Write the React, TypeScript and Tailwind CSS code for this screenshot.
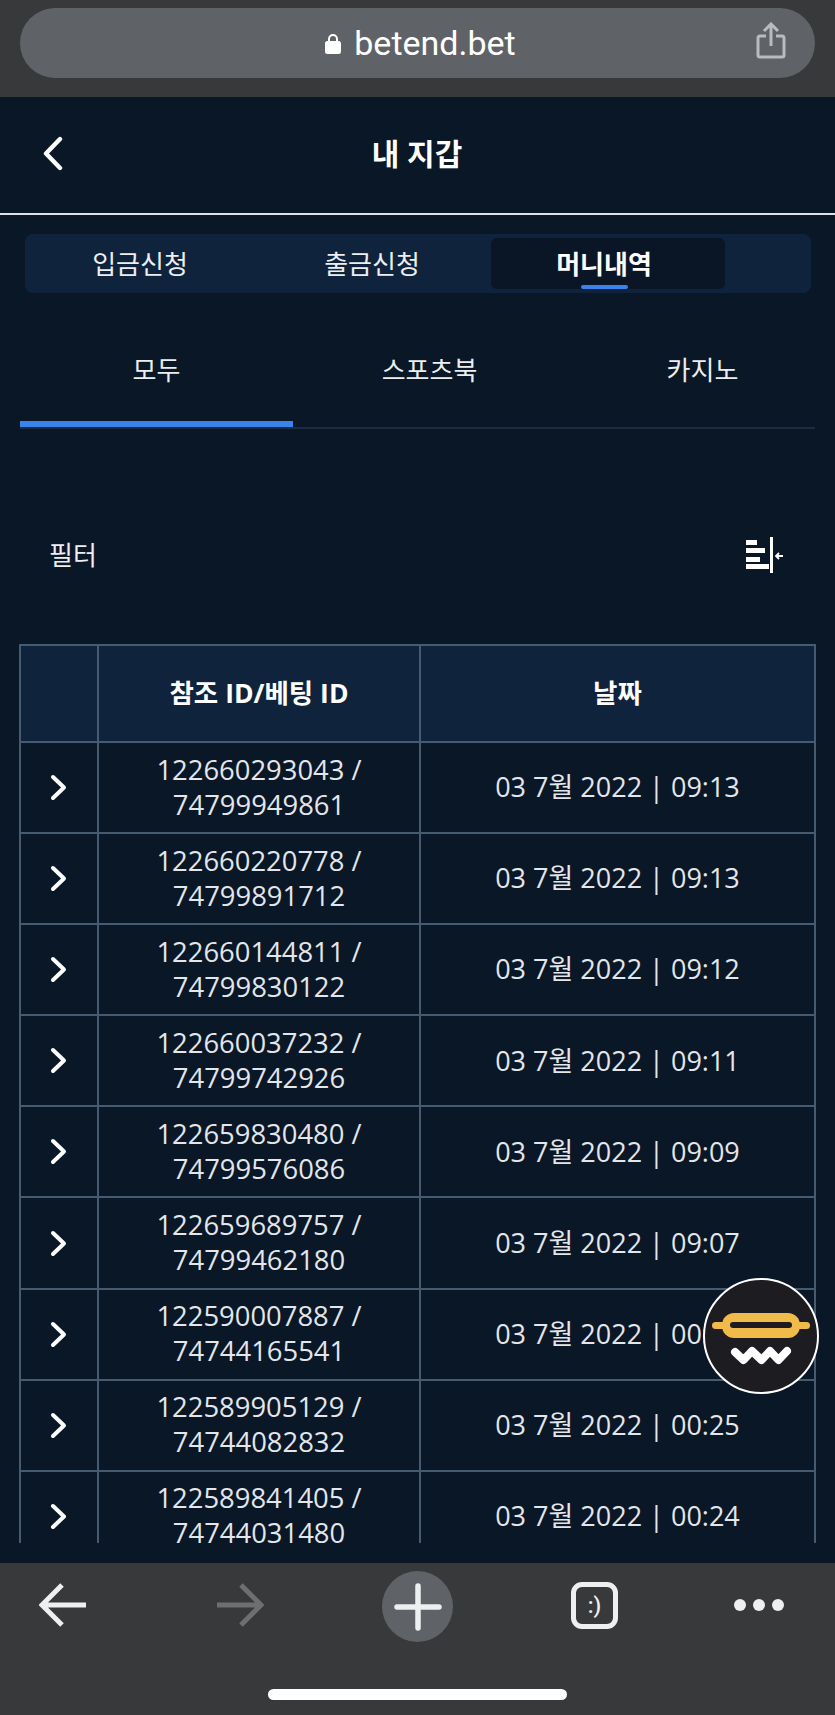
import React from 'react';

const KR = "font-['Open_Sans','Noto_Sans_CJK_KR',sans-serif]";

const ROWS = [
  ['122660293043', '74799949861', '03 7월 2022 | 09:13'],
  ['122660220778', '74799891712', '03 7월 2022 | 09:13'],
  ['122660144811', '74799830122', '03 7월 2022 | 09:12'],
  ['122660037232', '74799742926', '03 7월 2022 | 09:11'],
  ['122659830480', '74799576086', '03 7월 2022 | 09:09'],
  ['122659689757', '74799462180', '03 7월 2022 | 09:07'],
  ['122590007887', '74744165541', '03 7월 2022 | 00:26'],
  ['122589905129', '74744082832', '03 7월 2022 | 00:25'],
  ['122589841405', '74744031480', '03 7월 2022 | 00:24'],
];

const FilterIcon = () => (
  <svg width="38" height="36" viewBox="0 0 38 36" fill="none">
    <rect x="0" y="3" width="11" height="5" fill="#fff" />
    <rect x="0" y="11" width="19" height="5" fill="#fff" />
    <rect x="0" y="20" width="14" height="5" fill="#fff" />
    <rect x="0" y="27" width="23" height="5" fill="#fff" />
    <rect x="24" y="0" width="3" height="36" fill="#fff" />
    <path d="M37 19H30M33 16l-3 3 3 3" stroke="#fff" strokeWidth="1.8" />
  </svg>
);

const Chevron = () => (
  <svg width="18" height="27" viewBox="0 0 18 27" fill="none" className="mx-auto block">
    <path d="M3 3l11 10.5L3 24" stroke="#fff" strokeWidth="4" strokeLinecap="round" strokeLinejoin="round" />
  </svg>
);

const Fab = () => (
  <div className="absolute left-[703px] top-[1278px] w-[116px] h-[116px] rounded-full bg-[#1d1c20] border-2 border-white">
    <svg width="116" height="116" viewBox="0 0 116 116" fill="none" className="-m-[2px] block">
      <rect x="9" y="44" width="98" height="7" rx="3.5" fill="#f0bb4b" />
      <rect x="19" y="35" width="78" height="25" rx="12" fill="#f0bb4b" />
      <rect x="27" y="44" width="62" height="6" rx="3" fill="#1d1c20" />
      <path d="M32 74l8.5 8 8.5-9 9.5 9 8.5-9 8.5 9 8.5-9" stroke="#fff" strokeWidth="8" strokeLinecap="round" strokeLinejoin="round" />
    </svg>
  </div>
);

export default function App() {
  return (
    <div className={`relative w-[835px] h-[1715px] overflow-hidden flex flex-col bg-[#0a1727] text-white ${KR}`}>
      {/* browser url bar */}
      <div className="h-[97px] shrink-0 bg-[#38393b] px-5 pt-2">
        <div className="relative h-[70px] rounded-[35px] bg-[#5f6267] flex items-center justify-center pl-[6px]">
          <svg width="16" height="21" viewBox="0 0 16 21" fill="none" className="mr-[13px] mt-[1px]">
            <path d="M4 9V6a4 4 0 018 0v3" stroke="#fff" strokeWidth="2" />
            <rect x="0" y="8" width="16" height="13" rx="2.5" fill="#fff" />
          </svg>
          <span className="font-['Roboto',sans-serif] text-[34px] leading-none text-white">betend.bet</span>
          <svg width="30" height="37" viewBox="0 0 30 37" fill="none" className="absolute right-[29px] top-[14px]">
            <path d="M15 24V2M8 9l7-7 7 7" stroke="#b9bbbe" strokeWidth="3" />
            <path d="M10 14H4a2 2 0 00-2 2v17a2 2 0 002 2h22a2 2 0 002-2V16a2 2 0 00-2-2h-6" stroke="#b9bbbe" strokeWidth="3" />
          </svg>
        </div>
      </div>

      {/* page header */}
      <div className="relative h-[116px] shrink-0 flex items-center justify-center">
        <svg width="23" height="35" viewBox="0 0 23 35" fill="none" className="absolute left-[41px] top-[39px]">
          <path d="M19 3L5 17.5 19 32" stroke="#fff" strokeWidth="4.4" strokeLinecap="round" strokeLinejoin="round" />
        </svg>
        <span className="text-[30px] font-bold leading-none mt-[-2px] ml-[-1px]">내 지갑</span>
      </div>
      <div className="h-[2px] shrink-0 bg-[#dfe1e3]" />

      {/* wallet tabs */}
      <div className="mx-[25px] w-[786px] mt-[19px] h-[59px] shrink-0 rounded-[8px] bg-[#10233d] flex items-center text-[26px] leading-none">
        <div className="w-[230px] text-center text-[#eceef0]">입금신청</div>
        <div className="w-[230px] ml-[2px] text-center text-[#eceef0]">출금신청</div>
        <div className="relative w-[234px] h-[51px] ml-[4px] pr-[8px] rounded-[6px] bg-[#0a1626] flex items-center justify-center font-bold">
          머니내역
          <div className="absolute left-[90px] bottom-0 w-[47px] h-[4px] rounded-[2px] bg-[#3a82ec]" />
        </div>
      </div>

      {/* game tabs */}
      <div className="mx-5 mt-[40px] shrink-0 w-[795px] h-[103px] overflow-hidden flex flex-col">
        <div className="flex h-[96px] text-[26px] text-[#eceef0] leading-none">
          <div className="w-[273px] shrink-0 text-center pt-[24px] border-b-[6px] border-[#3a82ec] h-[94px]">모두</div>
          <div className="w-[273px] shrink-0 text-center pt-[24px]">스포츠북</div>
          <div className="w-[273px] shrink-0 text-center pt-[24px]">카지노</div>
        </div>
      </div>
      <div className="mx-5 mt-[-9px] h-[2px] shrink-0 bg-[#1e2c3f]" />

      {/* filter row */}
      <div className="mt-[107px] pl-[49px] pr-[51px] h-[38px] shrink-0 flex items-center justify-between">
        <span className="text-[26px] leading-none text-[#eceef0]">필터</span>
        <FilterIcon />
      </div>

      {/* history table */}
      <div className="ml-[19px] mt-[70px] w-[798px] h-[899px] shrink-0 overflow-hidden">
        <table className="w-[795px] border-collapse table-fixed text-[27px] text-[#e3e6ea]">
          <colgroup>
            <col className="w-[78px]" />
            <col className="w-[322px]" />
            <col className="w-[395px]" />
          </colgroup>
          <thead>
            <tr className="h-[97px] bg-[#10233d] text-white">
              <th className="border-2 border-[#465a70]" />
              <th className="border-2 border-[#465a70] text-[26.5px] font-bold">참조 ID/베팅 ID</th>
              <th className="border-2 border-[#465a70] text-[26.5px] font-bold">날짜</th>
            </tr>
          </thead>
          <tbody>
            {ROWS.map((row) => (
              <tr key={row[0]} className="h-[91.1px]">
                <td className="border-2 border-[#465a70] p-0"><Chevron /></td>
                <td className="border-2 border-[#465a70] p-0 pb-[2px] text-center text-[27.4px] leading-[35px]">
                  {row[0]} /<br />{row[1]}
                </td>
                <td className="border-2 border-[#465a70] p-0 text-center whitespace-nowrap">{row[2]}</td>
              </tr>
            ))}
          </tbody>
        </table>
      </div>

      {/* browser toolbar */}
      <div className="mt-auto h-[152px] shrink-0 bg-[#38393b] relative">
        <div className="flex items-start pl-[39px] pt-[20px]">
          <svg width="48" height="44" viewBox="0 0 48 44" fill="none">
            <path d="M47 22H4M23 2L3 22l20 20" stroke="#eeeff0" strokeWidth="5" />
          </svg>
          <svg width="48" height="44" viewBox="0 0 48 44" fill="none" className="ml-[129px]">
            <path d="M1 22h43M25 2l20 20-20 20" stroke="#6e6f71" strokeWidth="5" />
          </svg>
          <div className="ml-[118px] -mt-[12px] w-[71px] h-[71px] rounded-full bg-[#5f6267] flex items-center justify-center">
            <svg width="48" height="48" viewBox="0 0 48 48" fill="none">
              <path d="M24 3v42M3 24h42" stroke="#eeeff0" strokeWidth="5.5" strokeLinecap="round" />
            </svg>
          </div>
          <div className="ml-[118px] -mt-[1px] w-[47px] h-[47px] rounded-[11px] border-[5px] border-[#eeeff0] flex items-center justify-center text-[22px] font-medium leading-none font-['Roboto',sans-serif] text-[#eeeff0]">
            :)
          </div>
          <div className="ml-[116px] mt-[16px] flex gap-[7px]">
            <div className="w-[12px] h-[12px] rounded-full bg-[#eeeff0]" />
            <div className="w-[12px] h-[12px] rounded-full bg-[#eeeff0]" />
            <div className="w-[12px] h-[12px] rounded-full bg-[#eeeff0]" />
          </div>
        </div>
        <div className="mx-auto mt-[47px] w-[299px] h-[11px] rounded-full bg-white" />
      </div>

      <Fab />
    </div>
  );
}
